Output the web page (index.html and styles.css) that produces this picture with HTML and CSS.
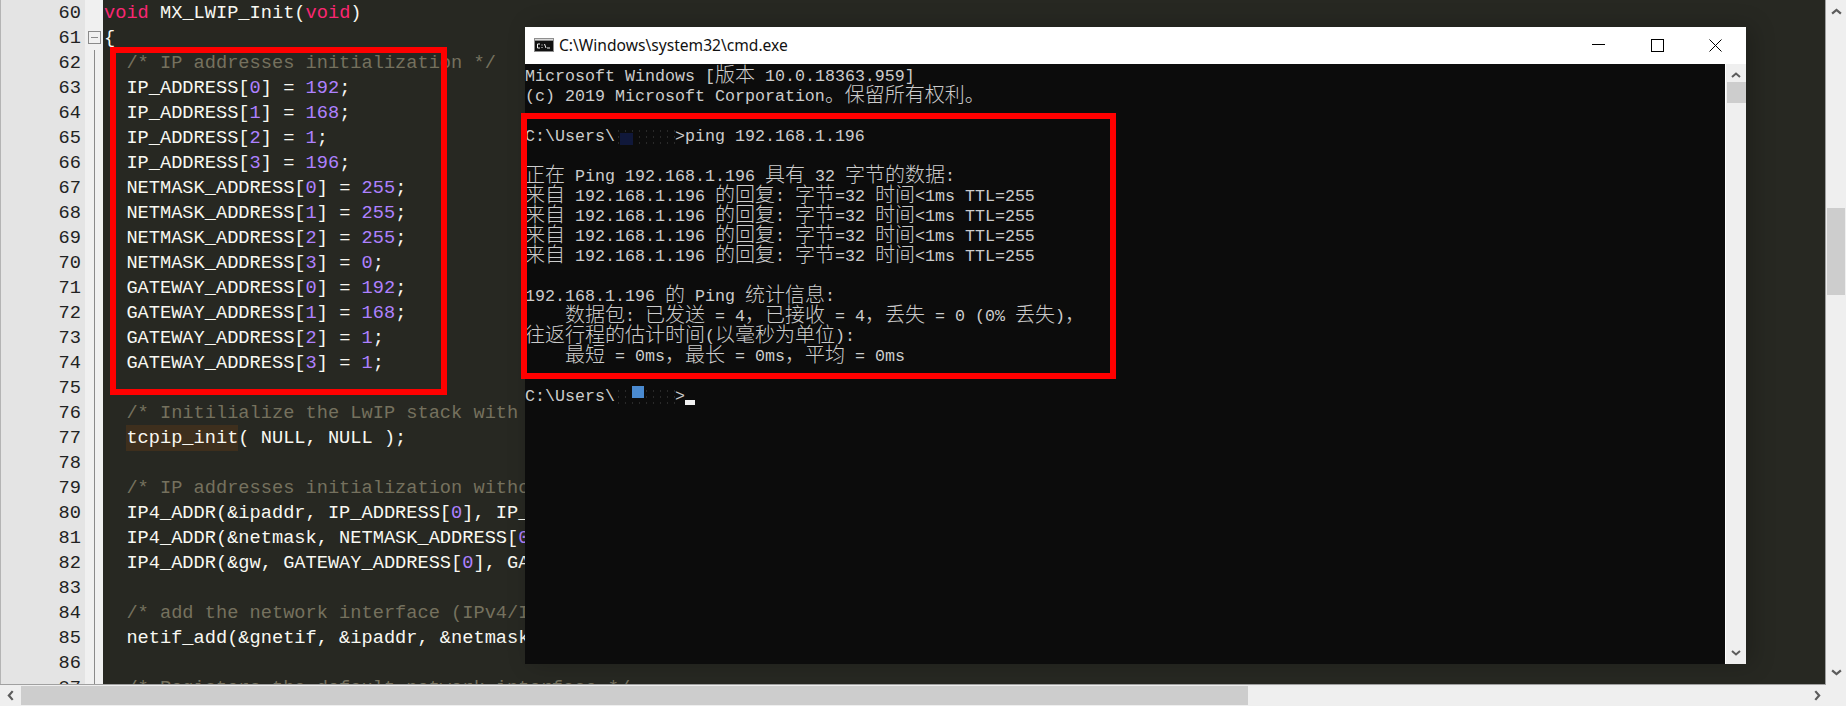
FILE: index.html
```html
<!DOCTYPE html>
<html lang="zh-CN">
<head>
<meta charset="utf-8">
<title>cmd ping</title>
<link rel="stylesheet" href="styles.css">
</head>
<body>
<div class="editor">
  <div class="editor-main">
    <div class="code-view">
      <div class="row"><span class="num">60</span><span class="fold"></span><code class="line top"><b>void</b> MX_LWIP_Init(<b>void</b>)</code></div>
      <div class="row"><span class="num">61</span><span class="fold"><i class="fold-box"></i></span><code class="line top">{</code></div>
      <div class="row"><span class="num">62</span><span class="fold bar"></span><code class="line"><em>/* IP addresses initialization */</em></code></div>
      <div class="row"><span class="num">63</span><span class="fold bar"></span><code class="line">IP_ADDRESS[<u>0</u>] = <u>192</u>;</code></div>
      <div class="row"><span class="num">64</span><span class="fold bar"></span><code class="line">IP_ADDRESS[<u>1</u>] = <u>168</u>;</code></div>
      <div class="row"><span class="num">65</span><span class="fold bar"></span><code class="line">IP_ADDRESS[<u>2</u>] = <u>1</u>;</code></div>
      <div class="row"><span class="num">66</span><span class="fold bar"></span><code class="line">IP_ADDRESS[<u>3</u>] = <u>196</u>;</code></div>
      <div class="row"><span class="num">67</span><span class="fold bar"></span><code class="line">NETMASK_ADDRESS[<u>0</u>] = <u>255</u>;</code></div>
      <div class="row"><span class="num">68</span><span class="fold bar"></span><code class="line">NETMASK_ADDRESS[<u>1</u>] = <u>255</u>;</code></div>
      <div class="row"><span class="num">69</span><span class="fold bar"></span><code class="line">NETMASK_ADDRESS[<u>2</u>] = <u>255</u>;</code></div>
      <div class="row"><span class="num">70</span><span class="fold bar"></span><code class="line">NETMASK_ADDRESS[<u>3</u>] = <u>0</u>;</code></div>
      <div class="row"><span class="num">71</span><span class="fold bar"></span><code class="line">GATEWAY_ADDRESS[<u>0</u>] = <u>192</u>;</code></div>
      <div class="row"><span class="num">72</span><span class="fold bar"></span><code class="line">GATEWAY_ADDRESS[<u>1</u>] = <u>168</u>;</code></div>
      <div class="row"><span class="num">73</span><span class="fold bar"></span><code class="line">GATEWAY_ADDRESS[<u>2</u>] = <u>1</u>;</code></div>
      <div class="row"><span class="num">74</span><span class="fold bar"></span><code class="line">GATEWAY_ADDRESS[<u>3</u>] = <u>1</u>;</code></div>
      <div class="row"><span class="num">75</span><span class="fold bar"></span><code class="line"></code></div>
      <div class="row"><span class="num">76</span><span class="fold bar"></span><code class="line"><em>/* Initilialize the LwIP stack with RTOS */</em></code></div>
      <div class="row"><span class="num">77</span><span class="fold bar"></span><code class="line"><mark>tcpip_init</mark>( NULL, NULL );</code></div>
      <div class="row"><span class="num">78</span><span class="fold bar"></span><code class="line"></code></div>
      <div class="row"><span class="num">79</span><span class="fold bar"></span><code class="line"><em>/* IP addresses initialization without DHCP (IPv4) */</em></code></div>
      <div class="row"><span class="num">80</span><span class="fold bar"></span><code class="line">IP4_ADDR(&amp;ipaddr, IP_ADDRESS[<u>0</u>], IP_ADDRESS[<u>1</u>]);</code></div>
      <div class="row"><span class="num">81</span><span class="fold bar"></span><code class="line">IP4_ADDR(&amp;netmask, NETMASK_ADDRESS[<u>0</u>]);</code></div>
      <div class="row"><span class="num">82</span><span class="fold bar"></span><code class="line">IP4_ADDR(&amp;gw, GATEWAY_ADDRESS[<u>0</u>], GATEWAY_ADDRESS[<u>1</u>]);</code></div>
      <div class="row"><span class="num">83</span><span class="fold bar"></span><code class="line"></code></div>
      <div class="row"><span class="num">84</span><span class="fold bar"></span><code class="line"><em>/* add the network interface (IPv4/IPv6) with RTOS */</em></code></div>
      <div class="row"><span class="num">85</span><span class="fold bar"></span><code class="line">netif_add(&amp;gnetif, &amp;ipaddr, &amp;netmask, &amp;gw);</code></div>
      <div class="row"><span class="num">86</span><span class="fold bar"></span><code class="line"></code></div>
      <div class="row"><span class="num">87</span><span class="fold bar"></span><code class="line"><em>/* Registers the default network interface */</em></code></div>
    </div>
    <div class="vscroll">
      <svg class="arrow" viewBox="0 0 10 6"><path d="M1 5 L5 1.5 L9 5"/></svg>
      <div class="track outer-track"><div class="thumb outer-thumb"></div></div>
      <svg class="arrow" viewBox="0 0 10 6"><path d="M1 1 L5 4.5 L9 1"/></svg>
    </div>
  </div>
  <div class="hscroll">
    <svg class="arrow-h" viewBox="0 0 6 10"><path d="M5 1 L1.5 5 L5 9"/></svg>
    <div class="hthumb"></div>
    <svg class="arrow-h end" viewBox="0 0 6 10"><path d="M1 1 L4.5 5 L1 9"/></svg>
  </div>
</div>

<div class="mark-box box-code"></div>

<section class="cmd">
  <header class="cmd-title">
    <svg class="cmd-icon" viewBox="0 0 20 14"><rect width="20" height="14" fill="#8e8e8e"/><rect x="1" y="3" width="18" height="10" fill="#111"/><rect x="1" y="1" width="18" height="1" fill="#d8d8d8"/><path d="M6 6H3.5V10H6M8 6.5V7.5M8 9V10M10.5 6L12 10M13 10H16" stroke="#eee" fill="none"/></svg>
    <span class="cmd-name">C:\Windows\system32\cmd.exe</span>
    <div class="cmd-controls">
      <span class="ctl"><svg viewBox="0 0 13 13"><path d="M0 5.5H13"/></svg></span>
      <span class="ctl"><svg viewBox="0 0 13 13"><rect x="0.5" y="0.5" width="12" height="12"/></svg></span>
      <span class="ctl"><svg viewBox="0 0 13 13"><path d="M0.5 0.5L12.5 12.5M12.5 0.5L0.5 12.5"/></svg></span>
    </div>
  </header>
  <div class="cmd-body">
    <div class="console">
      <div class="c">Microsoft Windows [<s>版本</s> 10.0.18363.959]</div>
      <div class="c">(c) 2019 Microsoft Corporation<s>。保留所有权利。</s></div>
      <div class="c"></div>
      <div class="c">C:\Users\<span class="blur">      </span>&gt;ping 192.168.1.196</div>
      <div class="c"></div>
      <div class="c"><s>正在</s> Ping 192.168.1.196 <s>具有</s> 32 <s>字节的数据</s>:</div>
      <div class="c"><s>来自</s> 192.168.1.196 <s>的回复</s>: <s>字节</s>=32 <s>时间</s>&lt;1ms TTL=255</div>
      <div class="c"><s>来自</s> 192.168.1.196 <s>的回复</s>: <s>字节</s>=32 <s>时间</s>&lt;1ms TTL=255</div>
      <div class="c"><s>来自</s> 192.168.1.196 <s>的回复</s>: <s>字节</s>=32 <s>时间</s>&lt;1ms TTL=255</div>
      <div class="c"><s>来自</s> 192.168.1.196 <s>的回复</s>: <s>字节</s>=32 <s>时间</s>&lt;1ms TTL=255</div>
      <div class="c"></div>
      <div class="c">192.168.1.196 <s>的</s> Ping <s>统计信息</s>:</div>
      <div class="c">    <s>数据包</s>: <s>已发送</s> = 4<s>，已接收</s> = 4<s>，丢失</s> = 0 (0% <s>丢失</s>)<s>，</s></div>
      <div class="c"><s>往返行程的估计时间</s>(<s>以毫秒为单位</s>):</div>
      <div class="c">    <s>最短</s> = 0ms<s>，最长</s> = 0ms<s>，平均</s> = 0ms</div>
      <div class="c"></div>
      <div class="c">C:\Users\<span class="blur">      </span>&gt;<span class="cursor"></span></div>
    </div>
    <div class="cmd-scroll">
      <svg class="arrow small" viewBox="0 0 10 6"><path d="M1 5 L5 1.5 L9 5"/></svg>
      <div class="track"><div class="thumb inner-thumb"></div></div>
      <svg class="arrow small" viewBox="0 0 10 6"><path d="M1 1 L5 4.5 L9 1"/></svg>
    </div>
  </div>
</section>

<div class="mark-box box-cmd"></div>
<div class="patch patch-navy"></div>
<div class="patch patch-blue"></div>
</body>
</html>
```

FILE: styles.css
```css
* { box-sizing: border-box; }
html, body { margin: 0; padding: 0; width: 1846px; height: 706px; overflow: hidden; background: #272822; }
.editor { width: 1846px; height: 706px; display: flex; flex-direction: column; }
.editor-main { flex: 1; min-height: 0; display: flex; }
.code-view { flex: 1; min-width: 0; overflow: hidden; background: #272822; border-bottom: 1px solid #a0a0a0; }
.row { display: flex; height: 25px; align-items: stretch; }
.num { width: 85px; flex: none; background: #e4e4e4; border-left: 1px solid #b4b4b4; text-align: right; padding-right: 4px; color: #222; font: 18.66px/27px "Liberation Mono", monospace; }
.fold { width: 18px; flex: none; background: #f0f0f0; position: relative; }
.fold.bar::before { content: ""; position: absolute; left: 9px; top: 0; bottom: 0; width: 1px; background: #8a8a8a; }
.fold-box { position: absolute; left: 3px; top: 6px; width: 13px; height: 13px; border: 1px solid #8a8a8a; background: #f0f0f0; }
.fold-box::before { content: ""; position: absolute; left: 2px; top: 5px; width: 7px; height: 1px; background: #8a8a8a; }
.line { flex: 1; padding-left: 23.4px; color: #f8f8f2; font: 18.66px/27px "Liberation Mono", monospace; white-space: pre; }
.line.top { padding-left: 1px; }
.line b { font-weight: 400; color: #f92672; }
.line u { text-decoration: none; color: #ae81ff; }
.line em { font-style: normal; color: #75715e; }
.line mark { background: #3e2f1d; color: #f8f8f2; padding: 2px 0; }
.vscroll { width: 21px; flex: none; background: #efefef; border-left: 1px solid #a0a0a0; display: flex; flex-direction: column; align-items: center; padding: 8px 0 9px; }
.arrow { width: 11px; height: 7px; flex: none; }
.arrow path, .arrow-h path { fill: none; stroke: #5c5c5c; stroke-width: 2; }
.track { flex: 1; width: 100%; min-height: 0; }
.outer-track { padding-top: 193px; }
.thumb { background: #cdcdcd; }
.outer-thumb { width: 18px; height: 87px; margin: 0 auto; }
.hscroll { height: 21px; flex: none; background: #efefef; display: flex; align-items: center; padding-left: 7px; padding-right: 25px; }
.arrow-h { width: 7px; height: 11px; flex: none; }
.arrow-h.end { margin-left: auto; }
.hthumb { width: 1227px; height: 19px; margin-left: 7px; background: #cdcdcd; }

.cmd { position: absolute; left: 525px; top: 27px; width: 1221px; height: 637px; display: flex; flex-direction: column; background: #fff; box-shadow: 6px 0 22px rgba(0,0,0,.22); }
.cmd-title { height: 37px; flex: none; display: flex; align-items: center; background: #fff; padding-left: 9px; }
.cmd-icon { width: 20px; height: 14px; flex: none; margin-top: -1px; }
.cmd-name { margin-left: 5px; margin-top: -1px; font: 15.6px "Noto Sans", "Liberation Sans", sans-serif; color: #111; }
.cmd-controls { margin-left: auto; display: flex; padding-right: 1px; }
.ctl { width: 58.5px; height: 37px; display: flex; align-items: center; justify-content: center; padding-bottom: 1px; }
.ctl svg { width: 13px; height: 13px; }
.ctl path, .ctl rect { fill: none; stroke: #000; stroke-width: 1; }
.cmd-body { flex: 1; min-height: 0; display: flex; }
.console { flex: 1; min-width: 0; background: #0c0c0c; color: #cccccc; font: 16.67px/20px "Liberation Mono", "Noto Sans CJK SC", monospace; overflow: hidden; padding-top: 3px; }
.c { height: 20px; white-space: pre; }
.c s { text-decoration: none; font: 300 20px/0 "Noto Sans CJK SC", sans-serif; vertical-align: -1px; }
.blur { color: transparent; background: radial-gradient(circle, rgba(110,110,110,.3) 1px, transparent 1px) 0 7px / 7px 6px; }
.cursor { display: inline-block; width: 10px; height: 5px; background: #f2f2f2; vertical-align: -4px; }
.cmd-scroll { width: 21px; flex: none; background: #efefef; border-left: 1px solid #fff; display: flex; flex-direction: column; align-items: center; padding: 8px 0 8px; }
.arrow.small { width: 10px; height: 6px; }
.inner-thumb { width: 19px; height: 21px; margin: 4px auto 0; }

.mark-box { position: absolute; border: 6px solid #ff0000; }
.box-code { left: 110px; top: 47px; width: 337px; height: 348px; }
.box-cmd { left: 521px; top: 113px; width: 595px; height: 266px; }
.patch { position: absolute; }
.patch-navy { left: 620px; top: 133px; width: 13px; height: 12px; background: #10183a; }
.patch-blue { left: 632px; top: 386px; width: 12px; height: 12px; background: #4a8ad0; }
```
